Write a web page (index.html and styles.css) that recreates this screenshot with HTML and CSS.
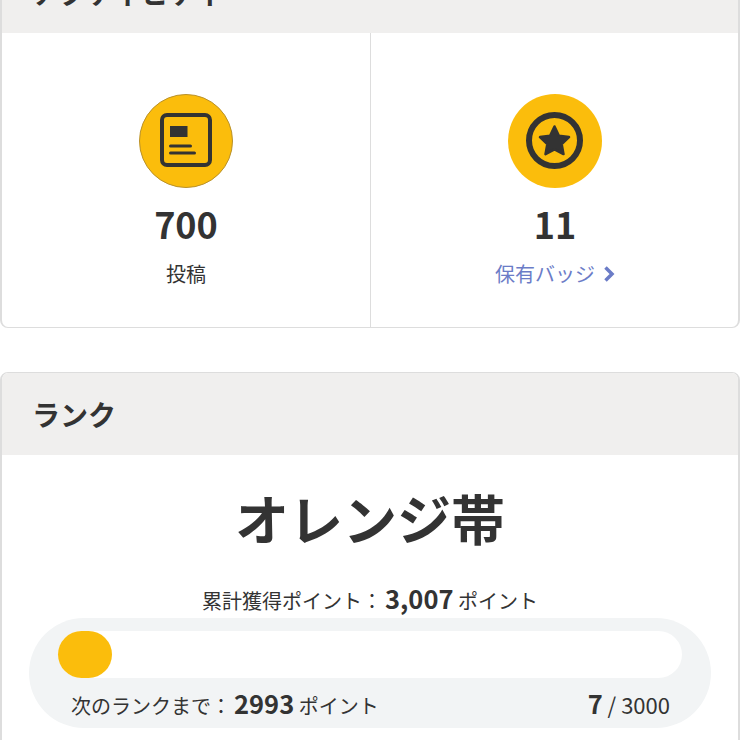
FILE: index.html
```html
<!DOCTYPE html>
<html lang="ja">
<head>
    <meta charset="UTF-8">
    <meta name="viewport" content="width=device-width, initial-scale=1.0">
    <title>マイページ</title>
    <link rel="stylesheet" href="styles.css">
</head>
<body>
    <main class="page">
        <section class="card">
            <h2 class="card-title">アクティビティ</h2>
            <div class="stats">
                <div class="stat">
                    <span class="stat-icon stat-icon-post">
                        <svg width="54" height="56" viewBox="0 0 54 56">
                            <rect x="3" y="2" width="48" height="50" rx="5" fill="none" stroke="#333" stroke-width="4"/>
                            <rect x="11" y="13" width="17.500" height="11" fill="#333"/>
                            <rect x="10" y="31.500" width="23" height="3" rx="1.500" fill="#333"/>
                            <rect x="10" y="38.500" width="27" height="3" rx="1.500" fill="#333"/>
                        </svg>
                    </span>
                    <strong class="stat-num">700</strong>
                    <span class="stat-label">投稿</span>
                </div>
                <div class="stat">
                    <span class="stat-icon">
                        <svg width="58" height="58" viewBox="0 0 58 58">
                            <circle cx="28.500" cy="28.500" r="25.500" fill="none" stroke="#333" stroke-width="6"/>
                            <path d="M28.500 14.500l4.400 9.300 10.100 1.300-7.300 7 1.800 10-9-4.800-9 4.800 1.800-10-7.300-7 10.100-1.300z" fill="#333" stroke="#333" stroke-width="2.500" stroke-linejoin="round"/>
                        </svg>
                    </span>
                    <strong class="stat-num">11</strong>
                    <a href="#" class="stat-link">保有バッジ
                        <svg width="12" height="18" viewBox="0 0 12 18"><path d="M2.500 2.500L9 9l-6.500 6.500" fill="none" stroke="#6b7cc7" stroke-width="3.500"/></svg>
                    </a>
                </div>
            </div>
        </section>

        <section class="card">
            <h2 class="card-title">ランク</h2>
            <div class="rank">
                <p class="rank-name">オレンジ帯</p>
                <p class="rank-total">累計獲得ポイント：<b>3,007</b> ポイント</p>
                <div class="progress">
                    <div class="track"><div class="fill" style="width: 54px"></div></div>
                    <div class="progress-row">
                        <span>次のランクまで：<b>2993</b> ポイント</span>
                        <span class="progress-count"><b>7</b> / 3000</span>
                    </div>
                </div>
            </div>
        </section>
    </main>
</body>
</html>
```

FILE: styles.css
```css
html {
    overflow: hidden;
    height: 100%;
}
body {
    font-family: "Noto Sans CJK JP", "Noto Sans", sans-serif;
    margin: 0;
    padding: 0;
    background-color: #fff;
    color: #333;
    height: 100%;
    overflow: hidden;
}
/* page is scrolled a little, the first card starts above the fold */
.page {
    margin-top: -50px;
    height: 790px;
    overflow: hidden;
}
.card {
    border: 1px solid #ddd;
    border-left-width: 2px;
    border-right-width: 2px;
    border-radius: 8px;
    margin-bottom: 44px;
    overflow: hidden;
    background-color: #fff;
}
.card-title {
    margin: 0;
    height: 82px;
    line-height: 82px;
    padding-left: 30px;
    font-size: 28px;
    font-weight: 700;
    background-color: #f0efee;
}
.stats {
    display: flex;
    height: 294px;
}
.stat {
    box-sizing: border-box;
    width: 50%;
    display: flex;
    flex-direction: column;
    align-items: center;
    padding-top: 61px;
}
.stat + .stat {
    border-left: 1px solid #ddd;
    padding-left: 1px;
}
.stat-icon {
    width: 94px;
    height: 94px;
    border-radius: 50%;
    background-color: #fbbd0c;
    display: flex;
    align-items: center;
    justify-content: center;
}
.stat-icon-post {
    box-sizing: border-box;
    border: 1px solid #b9912a;
}
.stat-num {
    font-size: 36px;
    line-height: 52px;
    margin-top: 9px;
}
.stat-label,
.stat-link {
    font-size: 20px;
    line-height: 28px;
    margin-top: 11px;
}
.stat-link {
    color: #6b7cc7;
    text-decoration: none;
    display: flex;
    align-items: center;
    gap: 8px;
}
.rank {
    padding: 25px 27px 40px;
    text-align: center;
}
.rank-name {
    margin: 0;
    font-size: 54px;
    font-weight: 700;
    line-height: 76px;
}
.rank-total {
    margin: 24px 0 0;
    font-size: 20px;
    line-height: 36px;
}
.rank-total b,
.progress-row b {
    font-size: 25.500px;
    margin-left: 3px;
}
.progress {
    margin-top: -1px;
    background-color: #f2f4f5;
    border-radius: 55px;
    padding: 13px 29px 8px;
    height: 110px;
    box-sizing: border-box;
}
.track {
    height: 47px;
    border-radius: 24px;
    background-color: #fff;
}
.fill {
    height: 47px;
    border-radius: 24px;
    background-color: #fbbd0c;
}
.progress-row {
    display: flex;
    justify-content: space-between;
    padding: 5px 12px 0 13px;
    font-size: 20px;
    line-height: 40px;
}
.progress-count {
    font-size: 22px;
}
.progress-count b {
    margin-left: 0;
}
```
